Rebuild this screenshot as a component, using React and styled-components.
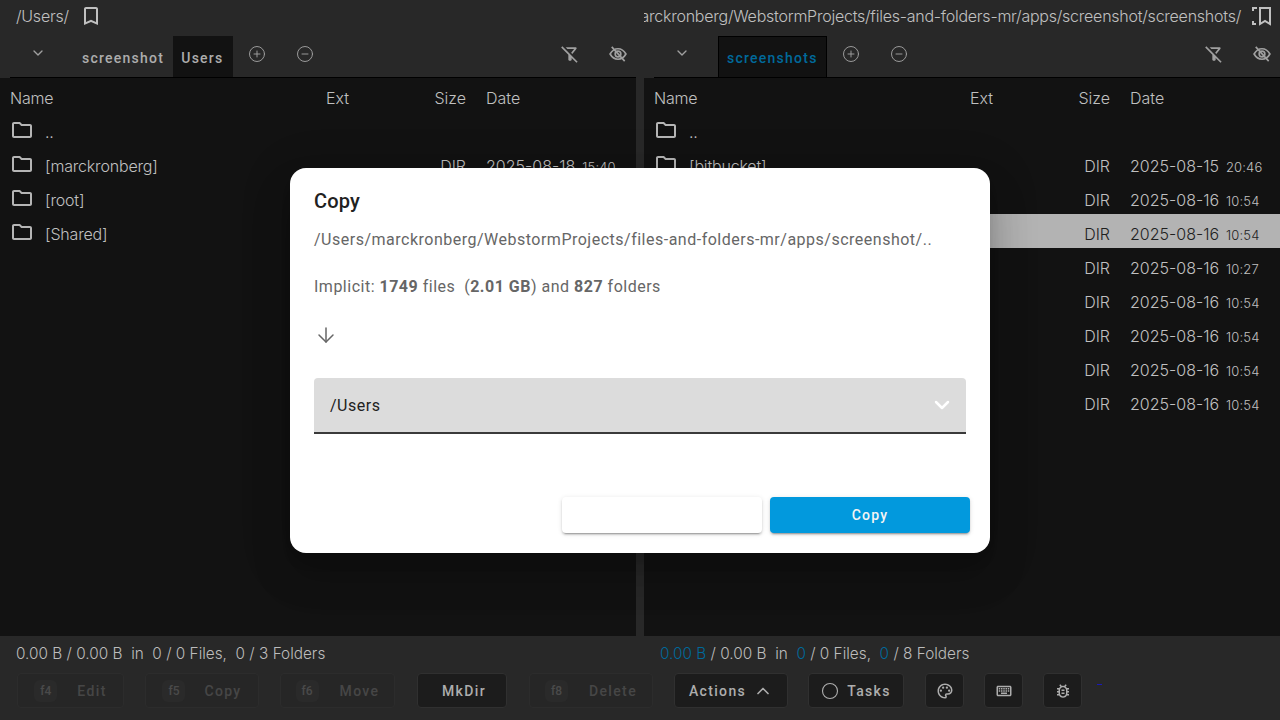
import React from "react";
import styled, { createGlobalStyle } from "styled-components";
import { ChevronDown, ChevronUp, CirclePlus, CircleMinus, ArrowDown, Circle } from "lucide-react";
import {
  MdOutlineBookmarkBorder,
  MdOutlineFolder,
  MdOutlineFilterAltOff,
  MdOutlinePalette,
  MdOutlineKeyboard,
  MdOutlineBugReport,
} from "react-icons/md";

const GlobalStyle = createGlobalStyle`
html, body {
  margin: 0;
  padding: 0;
  width: 1280px;
  height: 720px;
  overflow: hidden;
  background: #282828;
  font-family: Roboto, "Liberation Sans", sans-serif;
}
`;

const Page = styled.div`
  position: relative;
  width: 1280px;
  height: 720px;
  display: flex;
  flex-direction: column;
  background: #282828;
  color: #b5b5b5;
`;

const Panels = styled.div`
  display: grid;
  grid-template-columns: 636px 636px;
  column-gap: 8px;
  height: 636px;
`;

const Panel = styled.section`
  display: flex;
  flex-direction: column;
  min-width: 0;
`;

const PathBar = styled.div`
  height: 34px;
  box-sizing: border-box;
  display: flex;
  align-items: center;
  justify-content: ${(p) => (p.$right ? "flex-end" : "flex-start")};
  padding: ${(p) => (p.$right ? "0 8px 2px 0" : "0 0 2px 16px")};
  gap: ${(p) => (p.$right ? "11px" : "10px")};
  overflow: hidden;
  white-space: nowrap;
  font-family: Inter, Roboto, sans-serif;
  font-size: 16px;
  font-weight: 300;
  letter-spacing: -0.24px;
  color: #c0c0c0;
  & > svg {
    flex: none;
  }
`;

const TabBar = styled.div`
  height: 44px;
  box-sizing: border-box;
  margin-left: 10px;
  border-bottom: 1px solid #000;
  display: flex;
  align-items: flex-end;
`;

const TabArrow = styled.div`
  width: ${(p) => (p.$right ? "64px" : "63px")};
  height: 43px;
  display: flex;
  align-items: center;
  justify-content: center;
  padding: 0 8px 6px 0;
  box-sizing: border-box;
  color: #a0a0a0;
`;

const Tab = styled.div`
  height: 41px;
  box-sizing: border-box;
  padding: 2px ${(p) => (p.$blue ? "8px" : "9px")} 0 ${(p) => (p.$active ? "8px" : "9px")};
  display: flex;
  align-items: center;
  font-size: 14px;
  font-weight: 500;
  letter-spacing: 1.25px;
  color: ${(p) => (p.$blue ? "#00699b" : "#adadad")};
  background: ${(p) => (p.$active ? "#121212" : "transparent")};
  border: ${(p) => (p.$blue ? "1px solid #000" : "none")};
  border-bottom: none;
`;

const TabIcons = styled.div`
  height: 43px;
  flex: 1;
  display: flex;
  align-items: center;
  padding: 0 8px 3px 15px;
  box-sizing: border-box;
  gap: 30px;
  color: #a0a0a0;
`;

const Spacer = styled.div`
  flex: 1;
`;

const FilterOff = styled(MdOutlineFilterAltOff)`
  margin-right: -2px;
`;

const Listing = styled.div`
  flex: 1;
  background: #121212;
  overflow: hidden;
`;

const Row = styled.div`
  height: 34px;
  box-sizing: border-box;
  padding: 6px 0 0 10px;
  display: grid;
  grid-template-columns: 316px 100px 40px 1fr;
  align-items: center;
  font-family: Inter, Roboto, sans-serif;
  font-size: 16px;
  font-weight: 300;
  color: ${(p) => (p.$selected ? "#1f1f1f" : "#c0c0c0")};
  background: ${(p) => (p.$selected ? "#b3b3b3" : "transparent")};
`;

const NameCell = styled.div`
  display: flex;
  align-items: center;
  gap: 11px;
  white-space: nowrap;
  letter-spacing: -0.18px;
`;

const FolderIcon = styled(MdOutlineFolder)`
  width: 24px;
  height: 24px;
  margin: -7px 0 -3px;
  color: #b5b5b5;
`;

const SizeCell = styled.div`
  text-align: right;
`;

const DateCell = styled.div`
  padding-left: 20px;
  white-space: nowrap;
`;

const Time = styled.span`
  margin-left: 7px;
  font-size: 13px;
  letter-spacing: 0.15px;
`;

const StatusBar = styled.footer`
  height: 84px;
  display: flex;
  flex-direction: column;
`;

const Summaries = styled.div`
  height: 34px;
  flex: none;
  display: grid;
  grid-template-columns: 644px 1fr;
  align-items: center;
  font-family: Inter, Roboto, sans-serif;
  font-size: 15.35px;
  font-weight: 300;
  color: #bcbcbc;
  white-space: pre;
`;

const Summary = styled.div`
  padding-left: 16px;
`;

const Accent = styled.span`
  color: #00699b;
`;

const Toolbar = styled.div`
  display: flex;
  align-items: center;
  height: 35px;
  margin-top: 3px;
  padding-left: 17px;
  position: relative;
`;

const ToolButton = styled.div`
  height: 35px;
  width: ${(p) => p.$w}px;
  margin-right: ${(p) => p.$gap}px;
  padding-left: ${(p) => p.$shift || 0}px;
  box-sizing: border-box;
  border-radius: 4px;
  display: flex;
  align-items: center;
  justify-content: center;
  gap: ${(p) => p.$inner || 8}px;
  font-size: 14px;
  font-weight: 500;
  letter-spacing: 1.35px;
  background: ${(p) => (p.$disabled ? "#262626" : "#1c1c1c")};
  border: 1px solid ${(p) => (p.$disabled ? "#2c2c2c" : "#303030")};
  color: ${(p) => (p.$disabled ? "#464646" : "#adadad")};
`;

const KeyCap = styled.span`
  width: 23px;
  height: 22px;
  border-radius: 6px;
  background: #2a2a2a;
  display: flex;
  align-items: center;
  justify-content: center;
  font-size: 12px;
  font-weight: 500;
  letter-spacing: 0;
  color: #4a4a4a;
`;

const TinyMark = styled.span`
  position: absolute;
  left: 1097px;
  top: 11px;
  width: 5px;
  height: 1px;
  background: #1a1ab8;
`;

const Modal = styled.div`
  position: absolute;
  left: 290px;
  top: 168px;
  width: 700px;
  height: 385px;
  box-sizing: border-box;
  background: #fff;
  border-radius: 16px;
  padding: 20px 24px 0;
  display: flex;
  flex-direction: column;
  box-shadow: 0 11px 15px -7px rgba(0, 0, 0, 0.2), 0 24px 38px 3px rgba(0, 0, 0, 0.14),
    0 9px 46px 8px rgba(0, 0, 0, 0.12);
`;

const ModalTitle = styled.h2`
  margin: 0;
  font-size: 20px;
  line-height: 26px;
  font-weight: 500;
  letter-spacing: 0.15px;
  color: #212121;
`;

const ModalText = styled.p`
  margin: ${(p) => p.$top}px 0 0;
  font-size: 16px;
  line-height: 24px;
  letter-spacing: 0.5px;
  color: #666;
  white-space: pre;
`;

const ArrowRow = styled.div`
  margin-top: 24px;
  height: 24px;
  color: #666;
`;

const SelectBox = styled.div`
  margin-top: 31px;
  height: 56px;
  box-sizing: border-box;
  background: #dcdcdc;
  border-radius: 4px 4px 0 0;
  border-bottom: 2px solid #3a3a3a;
  padding: 0 16px;
  display: flex;
  align-items: center;
  justify-content: space-between;
  font-size: 16px;
  letter-spacing: 0.5px;
  color: #212121;
`;

const SelectChevron = styled(ChevronDown)`
  color: #fff;
  margin-right: -4px;
`;

const ModalActions = styled.div`
  margin: 63px -4px 0 0;
  display: flex;
  justify-content: flex-end;
  gap: 8px;
`;

const DialogButton = styled.div`
  width: 200px;
  height: 36px;
  border-radius: 4px;
  display: flex;
  align-items: center;
  justify-content: center;
  font-size: 14px;
  font-weight: 500;
  letter-spacing: 1.25px;
  color: #f4f4f4;
  background: ${(p) => (p.$primary ? "#0299dd" : "#fff")};
  box-shadow: 0 3px 1px -2px rgba(0, 0, 0, 0.2), 0 2px 2px 0 rgba(0, 0, 0, 0.14),
    0 1px 5px 0 rgba(0, 0, 0, 0.12);
`;

// eye with a slash through it, the eye stays whole
const EyeSlash = () => (
  <svg width="20" height="20" viewBox="0 0 24 24" fill="none" stroke="currentColor" strokeWidth="2">
    <path d="M2.5 12c2.4-4.2 5.6-6.3 9.5-6.3s7.100 2.100 9.500 6.300c-2.400 4.200-5.600 6.300-9.500 6.300S4.900 16.200 2.500 12z" />
    <circle cx="12" cy="12" r="3.400" />
    <path d="M4.500 3.500l15.500 17" />
  </svg>
);

// the right bookmark: a bracket behind the bookmark shape
const SplitBookmark = () => (
  <svg width="20" height="20" viewBox="0 0 20 20" fill="none" stroke="currentColor" strokeWidth="2">
    <path d="M5 2H1v3M1 15v3h3" />
    <path d="M8 2h10v16l-5-3-5 3V2z" />
  </svg>
);

const leftRows = [
  { name: ".." },
  { name: "[marckronberg]", date: "2025-08-18", time: "15:40" },
  { name: "[root]" },
  { name: "[Shared]" },
];

const rightRows = [
  { name: ".." },
  { name: "[bitbucket]", date: "2025-08-15", time: "20:46" },
  { date: "2025-08-16", time: "10:54" },
  { date: "2025-08-16", time: "10:54", selected: true },
  { date: "2025-08-16", time: "10:27" },
  { date: "2025-08-16", time: "10:54" },
  { date: "2025-08-16", time: "10:54" },
  { date: "2025-08-16", time: "10:54" },
  { date: "2025-08-16", time: "10:54" },
];

const FileList = ({ rows }) => (
  <Listing>
    <Row>
      <NameCell>Name</NameCell>
      <div>Ext</div>
      <SizeCell>Size</SizeCell>
      <DateCell>Date</DateCell>
    </Row>
    {rows.map((row, i) => (
      <Row key={i} $selected={row.selected}>
        <NameCell>
          <FolderIcon />
          {row.name}
        </NameCell>
        <div />
        <SizeCell>{row.date ? "DIR" : ""}</SizeCell>
        <DateCell>
          {row.date}
          {row.time && <Time>{row.time}</Time>}
        </DateCell>
      </Row>
    ))}
  </Listing>
);

const TabTools = () => (
  <TabIcons>
    <CirclePlus size={18} strokeWidth={1.25} />
    <CircleMinus size={18} strokeWidth={1.25} />
    <Spacer />
    <FilterOff size={20} />
    <EyeSlash />
  </TabIcons>
);

const App = () => (
  <Page>
    <GlobalStyle />
    <Panels>
      <Panel>
        <PathBar>
          /Users/
          <MdOutlineBookmarkBorder size={24} />
        </PathBar>
        <TabBar>
          <TabArrow>
            <ChevronDown size={16} />
          </TabArrow>
          <Tab>screenshot</Tab>
          <Tab $active>Users</Tab>
          <TabTools />
        </TabBar>
        <FileList rows={leftRows} />
      </Panel>
      <Panel>
        <PathBar $right>
          /Users/marckronberg/WebstormProjects/files-and-folders-mr/apps/screenshot/screenshots/
          <SplitBookmark />
        </PathBar>
        <TabBar>
          <TabArrow $right>
            <ChevronDown size={16} />
          </TabArrow>
          <Tab $active $blue>
            screenshots
          </Tab>
          <TabTools />
        </TabBar>
        <FileList rows={rightRows} />
      </Panel>
    </Panels>
    <StatusBar>
      <Summaries>
        <Summary>0.00 B / 0.00 B  in  0 / 0 Files,  0 / 3 Folders</Summary>
        <Summary>
          <Accent>0.00 B</Accent> / 0.00 B  in  <Accent>0</Accent> / 0 Files,  <Accent>0</Accent> / 8 Folders
        </Summary>
      </Summaries>
      <Toolbar>
        <ToolButton $disabled $w={107} $gap={21} $inner={20}>
          <KeyCap>f4</KeyCap>Edit
        </ToolButton>
        <ToolButton $disabled $w={114} $gap={21} $inner={19}>
          <KeyCap>f5</KeyCap>Copy
        </ToolButton>
        <ToolButton $disabled $w={115} $gap={22} $inner={21}>
          <KeyCap>f6</KeyCap>Move
        </ToolButton>
        <ToolButton $w={90} $gap={22} $shift={4}>MkDir</ToolButton>
        <ToolButton $disabled $w={124} $gap={21} $inner={21}>
          <KeyCap>f8</KeyCap>Delete
        </ToolButton>
        <ToolButton $w={114} $gap={20} $inner={7}>
          Actions
          <ChevronUp size={20} />
        </ToolButton>
        <ToolButton $w={96} $gap={21} $inner={8}>
          <Circle size={18} strokeWidth={1.5} />
          Tasks
        </ToolButton>
        <ToolButton $w={39} $gap={20}>
          <MdOutlinePalette size={18} />
        </ToolButton>
        <ToolButton $w={39} $gap={20}>
          <MdOutlineKeyboard size={18} />
        </ToolButton>
        <ToolButton $w={39} $gap={0}>
          <MdOutlineBugReport size={18} />
        </ToolButton>
        <TinyMark />
      </Toolbar>
    </StatusBar>
    <Modal>
      <ModalTitle>Copy</ModalTitle>
      <ModalText $top={14}>/Users/marckronberg/WebstormProjects/files-and-folders-mr/apps/screenshot/..</ModalText>
      <ModalText $top={23}>
        Implicit: <b>1749</b> files  (<b>2.01 GB</b>) and <b>827</b> folders
      </ModalText>
      <ArrowRow>
        <ArrowDown size={24} strokeWidth={1.5} />
      </ArrowRow>
      <SelectBox>
        /Users
        <SelectChevron size={24} strokeWidth={2.5} />
      </SelectBox>
      <ModalActions>
        <DialogButton />
        <DialogButton $primary>Copy</DialogButton>
      </ModalActions>
    </Modal>
  </Page>
);

export default App;
